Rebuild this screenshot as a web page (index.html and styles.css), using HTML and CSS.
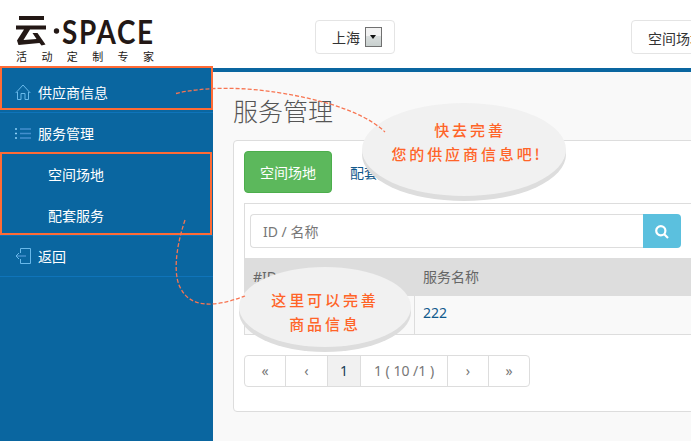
FILE: index.html
```html
<!DOCTYPE html>
<html lang="zh-CN">
<head>
<meta charset="utf-8">
<title>服务管理</title>
<link rel="stylesheet" href="styles.css">
</head>
<body>
<div class="app">
  <aside class="side">
    <div class="brand">
      <svg class="logo" width="62" height="47" viewBox="0 0 62 47" role="img" aria-label="云">
        <path class="ink" d="M19 16h25v4H19zM16 25.500h30v4H30l-6.500 10.500 13-1-4-6h5l8 11.500-4 1-2-2.500-21 2-1.500-4.500 7-11h-8z"/>
        <circle class="ink" cx="56.500" cy="31" r="2.700"/>
      </svg>
      <div class="wordmark">SPACE</div>
      <div class="tagline">活动定制专家</div>
    </div>
    <nav class="nav">
      <a class="item item-supplier"><svg class="icon" viewBox="0 0 16 16"><path d="M.7 9 8 1l7.300 8M2.500 8v7.500h3.500V9.500h4v6h3.500V8"/></svg>供应商信息</a>
      <a class="item item-service"><svg class="icon list" viewBox="0 0 16 16"><path class="dots" d="M0 4h2M0 8.500h2M0 13h2"/><path d="M5 4h11M5 8.500h11M5 13h11"/></svg>服务管理</a>
      <div class="sub">
        <a>空间场地</a>
        <a>配套服务</a>
      </div>
      <a class="item item-back"><svg class="icon" viewBox="0 0 16 16"><path d="M5.500 5V.5h10v15h-10V11"/><path class="shaft" d="M2 8h9"/><path d="M4 5 1 8l3 3"/></svg>返回</a>
    </nav>
  </aside>
  <main class="main">
    <header class="top">
      <div class="city">上海<span class="drop"></span></div>
      <div class="category">空间场地</div>
    </header>
    <section class="content">
      <h1>服务管理</h1>
      <div class="panel">
        <div class="tabs"><a class="tab on">空间场地</a><a class="tab">配套服务</a></div>
        <div class="table">
          <div class="search">
            <div class="field">ID / 名称</div>
            <div class="go"><svg width="14" height="14" viewBox="0 0 14 14"><circle cx="5.800" cy="5.800" r="4.600"/><path d="m9 9 4 4"/></svg></div>
          </div>
          <div class="row head"><span>#ID</span><span>服务名称</span></div>
          <div class="row"><span></span><span class="name">222</span></div>
        </div>
        <div class="pager">
          <a class="p1">«</a><a class="p2">‹</a><a class="p3">1</a><a class="p4">1 ( 10 /1 )</a><a class="p5">›</a><a class="p6">»</a>
        </div>
      </div>
    </section>
  </main>
  <div class="mark mark-supplier"></div>
  <div class="mark mark-sub"></div>
  <div class="bubble bubble-supplier"><span class="first">快去完善</span><br>您的供应商信息吧!</div>
  <div class="bubble bubble-goods">这里可以完善<br>商品信息</div>
  <svg class="links" width="691" height="441" viewBox="0 0 691 441">
    <path d="M176 93.500C202 87 239 87 271 91.500S359 107 385 132"/>
    <path d="M185 220C174 253 174 278 181 289C190 306 211 309 245 296"/>
  </svg>
</div>
</body>
</html>
```
FILE: styles.css
```css
* { box-sizing: border-box; }
body {
  margin: 0;
  font: 14px/20px "Noto Sans", "Noto Sans CJK SC", sans-serif;
  color: #333;
}
.app {
  position: relative;
  display: flex;
  width: 691px;
  height: 441px;
  overflow: hidden;
  background: #f9f9f9;
}

/* sidebar */
.side { flex: none; width: 213px; background: #0a66a0; color: #fff; font-family: "Noto Sans CJK SC", sans-serif; }
.brand { position: relative; height: 67px; background: #fff; color: #231815; }
.logo { display: block; }
.ink { fill: #231815; }
.wordmark {
  position: absolute;
  left: 62px;
  top: 16px;
  font: bold 33px/30px Lato, sans-serif;
  letter-spacing: 2px;
  transform: scaleX(.845);
  transform-origin: 0 0;
}
.tagline {
  position: absolute;
  left: 16px;
  top: 48px;
  font-size: 11px;
  line-height: 16px;
  letter-spacing: 14.400px;
  white-space: nowrap;
}
.item { display: flex; align-items: center; padding-left: 15px; border-bottom: 1px solid #0f74ba; }
.item-supplier { height: 46px; padding-top: 5px; }
.item-service { height: 41px; padding-bottom: 2px; border: 0; }
.item-back { height: 41px; }
.icon { width: 16px; height: 16px; margin-right: 7px; fill: none; stroke: #69b9ea; stroke-width: 1; }
.icon.list { stroke: #448fcd; stroke-width: 1.500; }
.icon .dots { stroke: #8fd0f5; }
.icon .shaft { stroke: #448fcd; stroke-width: 1.500; }
.sub { height: 82px; border-bottom: 1px solid #0f74ba; }
.sub a { display: block; height: 41px; line-height: 41px; padding-left: 48px; }

/* header */
.main { flex: 1; min-width: 0; }
.top { display: flex; gap: 236px; height: 72px; padding: 20px 0 0 102px; background: #fff; border-bottom: 4px solid #0a66a0; }
.city, .category {
  flex: none;
  display: flex;
  align-items: center;
  height: 34px;
  padding-left: 16px;
  border: 1px solid #e4e4e4;
  border-radius: 4px;
}
.city { width: 80px; padding-top: 1px; }
.category { width: 120px; padding-top: 3px; }
.drop {
  position: relative;
  width: 17px;
  height: 20px;
  margin: -2px 0 0 5px;
  border: 1px solid #707070;
  background: linear-gradient(#f2f2f2 45%, #d9dddd 46%, #c8d0ce);
}
.drop::after {
  content: "";
  position: absolute;
  left: 4px;
  top: 7px;
  border: 3.500px solid transparent;
  border-top: 4px solid #111;
  border-bottom: 0;
}

/* content */
.content { padding: 18px 0 0 20px; }
h1 { margin: 0; height: 50px; font: 300 25px/40px "Noto Sans CJK SC", sans-serif; color: #555; }
.panel { width: 600px; height: 272px; padding: 10px; background: #fff; border: 1px solid #ddd; border-radius: 4px; }
.tabs { display: flex; height: 52px; }
.tab { height: 42px; padding: 1px 17px 0 18px; line-height: 41px; color: #11598c; }
.tab.on { width: 88px; padding: 0 0 0 15px; color: #fff; background: #5cb85c; border: 1px solid #4cae4c; border-radius: 4px; }
.table { height: 132px; border: 1px solid #ddd; }
.search { display: flex; height: 54px; padding: 10px 0 0 5px; }
.field { width: 393px; height: 34px; padding: 0 12px; line-height: 33px; color: #777; border: 1px solid #ddd; border-right: 0; border-radius: 4px 0 0 4px; }
.go { display: flex; align-items: center; justify-content: center; width: 38px; height: 34px; padding-top: 2px; background: #5bc0de; border-radius: 0 4px 4px 0; }
.go svg { fill: none; stroke: #fff; stroke-width: 2.200; }
.row { display: flex; height: 38px; line-height: 38px; background: #f9f9f9; }
.row span { padding-left: 8px; }
.row span:first-child { width: 170px; border-right: 1px solid #ddd; }
.row.head { background: #ddd; color: #666; }
.row.head span:first-child { border-color: #ddd; }
.row .name { color: #11598c; line-height: 34px; }
.pager { display: flex; width: 286px; height: 32px; margin-top: 20px; border: 1px solid #ddd; border-radius: 4px; overflow: hidden; }
.pager a { border-right: 1px solid #ddd; line-height: 30px; text-align: center; color: #777; }
.pager .p1 { width: 41px; }
.pager .p2 { width: 42px; }
.pager .p3 { width: 33px; background: #f1f1f1; color: #173b55; }
.pager .p4 { width: 87px; white-space: nowrap; }
.pager .p5 { width: 41px; }
.pager .p6 { flex: 1; border: 0; }

/* guide overlay */
.mark { position: absolute; border: 2px solid #ff6b35; }
.mark-supplier { left: 0; top: 66px; width: 213px; height: 44px; }
.mark-sub { left: 0; top: 152px; width: 212px; height: 83px; }
.bubble {
  position: absolute;
  border-radius: 50%;
  background: #f1f1f1;
  box-shadow: 0 5px 0 #ddd;
  color: #ff6428;
  font: 500 15px/24px "Noto Sans CJK SC", sans-serif;
  letter-spacing: 2.900px;
  text-align: center;
  white-space: nowrap;
}
.bubble-supplier { left: 362px; top: 103px; width: 204px; height: 93px; padding-top: 15px; padding-left: 6px; }
.bubble-supplier .first { padding-left: 6px; }
.bubble-goods { left: 239px; top: 267px; width: 172px; height: 80px; padding-top: 21px; }
.links { position: absolute; left: 0; top: 0; fill: none; stroke: #f87552; stroke-width: 1.300; stroke-dasharray: 4 2; }
```
